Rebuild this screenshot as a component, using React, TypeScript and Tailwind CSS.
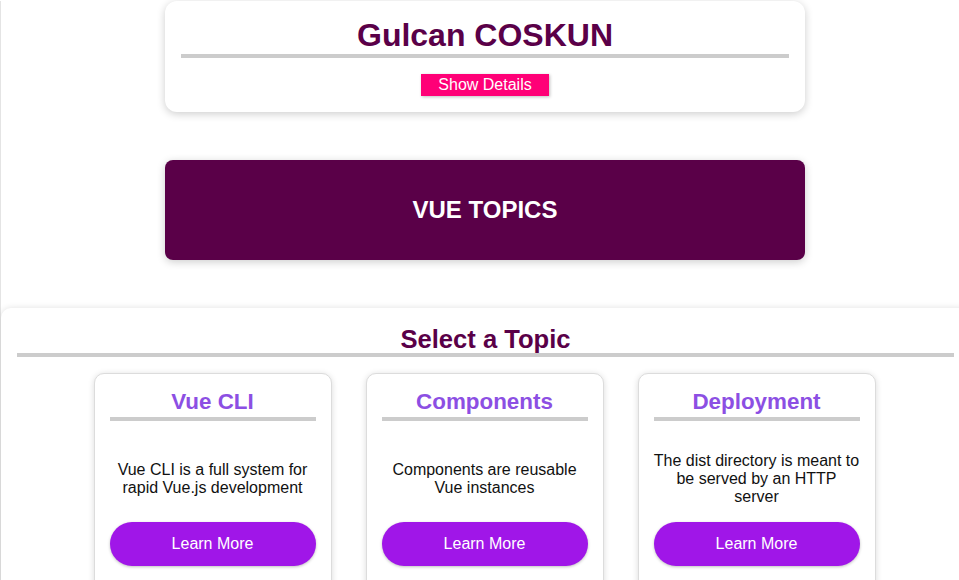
const topics = [
  { title: 'Vue CLI', text: 'Vue CLI is a full system for rapid Vue.js development' },
  { title: 'Components', text: 'Components are reusable Vue instances' },
  { title: 'Deployment', text: 'The dist directory is meant to be served by an HTTP server' },
];

const TopicCard = ({ title, text }: { title: string; text: string }) => (
  <div className="w-[238px] h-[240px] shrink-0 bg-white rounded-[10px] border border-[#dcdcdc] shadow-[0_1px_6px_rgba(0,0,0,0.15)] px-[15px] pt-[13px]">
    <h3 className="text-[22.4px] leading-[30px] font-bold text-center text-[#8c4fe3]">{title}</h3>
    <div className="h-1 bg-[#cccccc]" />
    <div className="h-[101px] pt-[14px] flex items-center justify-center">
      <p className="text-[16px] leading-[18px] text-center text-[#111]">{text}</p>
    </div>
    <button className="w-full h-11 rounded-full bg-[#a016e8] text-white text-[16px] shadow-[0_1px_3px_rgba(0,0,0,0.25)]">
      Learn More
    </button>
  </div>
);

export default function App() {
  return (
    <div className="w-full h-[580px] overflow-hidden bg-white font-['Liberation_Sans',Arial,sans-serif]">
      <div className="w-[970px] min-h-[580px] border-l border-[#e4e4e4]">
        {/* Header card */}
        <div className="w-[640px] ml-[164px] mt-px bg-white rounded-xl shadow-[0_2px_8px_rgba(0,0,0,0.2)] p-4">
          <h1 className="text-[32px] leading-[37px] font-bold text-center text-[#5a0048]">Gulcan COSKUN</h1>
          <div className="h-1 bg-[#cccccc]" />
          <div className="flex justify-center mt-4">
            <button className="h-[22px] px-[17px] bg-[#ff0077] text-white text-[16px] leading-[22px] shadow-[1px_1px_3px_rgba(0,0,0,0.25)]">
              Show Details
            </button>
          </div>
        </div>

        {/* Banner */}
        <div className="w-[640px] ml-[164px] mt-12 h-[100px] rounded-lg bg-[#5a0048] shadow-[0_2px_8px_rgba(0,0,0,0.2)] flex items-center justify-center">
          <h2 className="text-[24px] font-bold text-white">VUE TOPICS</h2>
        </div>

        {/* Topics */}
        <div className="mt-12 bg-white rounded-[10px] shadow-[0_0_6px_rgba(0,0,0,0.12)] px-4 pt-[17px] pb-8">
          <h2 className="text-[25.6px] leading-[28px] font-bold text-center text-[#5a0048]">Select a Topic</h2>
          <div className="h-1 bg-[#cccccc]" />
          <div className="flex justify-center gap-[34px] mt-4 pr-0.5">
            {topics.map((t) => (
              <TopicCard key={t.title} title={t.title} text={t.text} />
            ))}
          </div>
        </div>
      </div>
    </div>
  );
}
